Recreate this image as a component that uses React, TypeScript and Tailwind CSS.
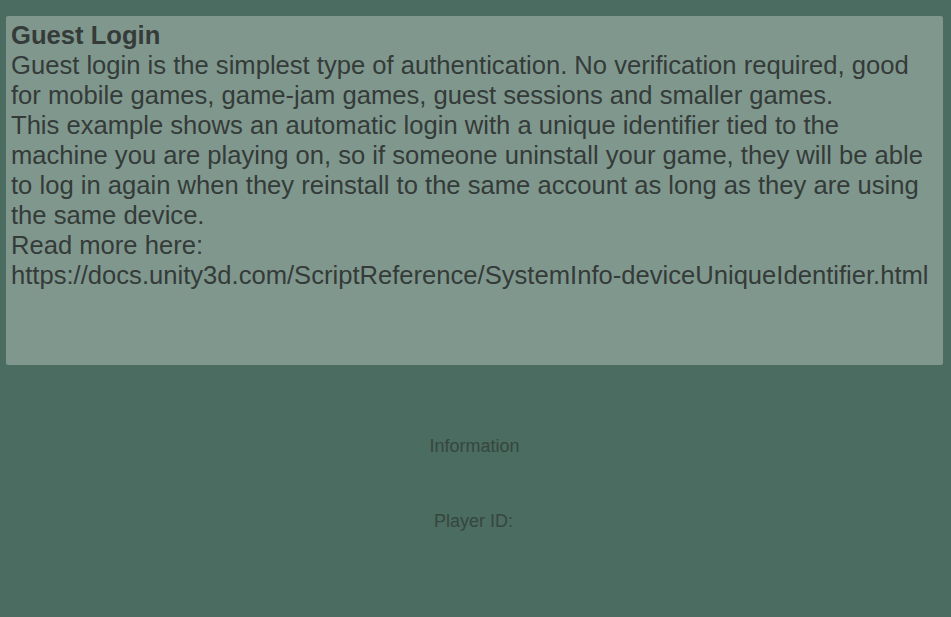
export default function App() {
  return (
    <div className="w-[951px] h-[617px] bg-[#4b6c60] font-['Liberation_Sans',Arial,sans-serif] overflow-hidden">
      <div className="pt-[16px] pl-[6px] pr-[8px]">
        <div className="h-[349px] bg-[#80978e] px-[5px] pt-[4px] text-[25.6px] leading-[30px] text-[#343b38] rounded-[2px]">
          <div className="font-bold">Guest Login</div>
          <p>
            Guest login is the simplest type of authentication. No verification required, good
            <br />
            for mobile games, game-jam games, guest sessions and smaller games.
            <br />
            This example shows an automatic login with a unique identifier tied to the
            <br />
            machine you are playing on, so if someone uninstall your game, they will be able
            <br />
            to log in again when they reinstall to the same account as long as they are using
            <br />
            the same device.
            <br />
            Read more here:
            <br />
            https://docs.unity3d.com/ScriptReference/SystemInfo-deviceUniqueIdentifier.html
          </p>
        </div>
      </div>
      <div className="flex flex-col items-center pt-[71px] gap-[55px] text-[18px] leading-[20px] text-[#36463f]">
        <span className="-ml-[2px]">Information</span>
        <span className="-ml-[4px]">Player ID:</span>
      </div>
    </div>
  )
}
